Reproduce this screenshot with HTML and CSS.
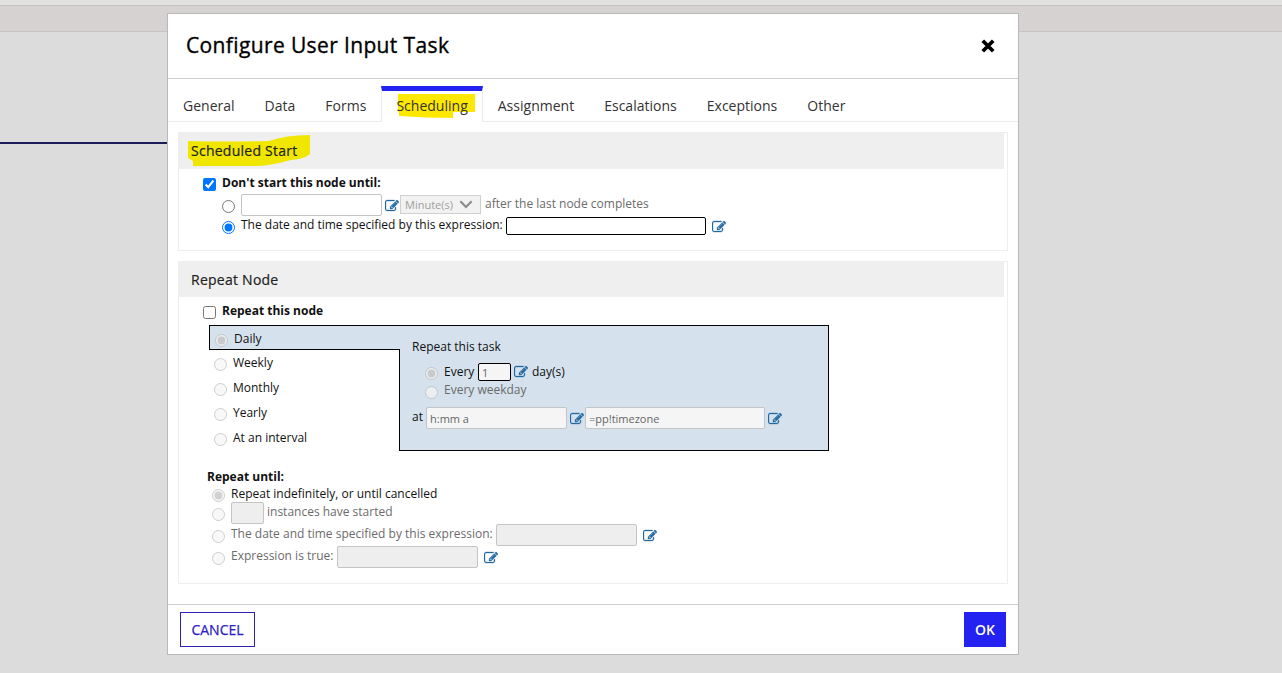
FILE: index.html
```
<!DOCTYPE html>
<html lang="en">
<head>
  <meta charset="UTF-8">
  <meta name="viewport" content="width=device-width, initial-scale=1.0">
  <title>Configure User Input Task</title>
  <link rel="stylesheet" href="styles.css">
</head>
<body>
  <svg class="sprite" width="0" height="0">
    <symbol id="edit" viewBox="0 0 1792 1792">
      <path d="M888 1184l116-116-152-152-116 116v56h96v96h56zm440-720q-16-16-33 1l-350 350q-17 17-1 33t33-1l350-350q17-17 1-33zm80 594v190q0 119-84.5 203.5t-203.5 84.5h-832q-119 0-203.5-84.5t-84.5-203.5v-832q0-119 84.5-203.5t203.5-84.5h832q63 0 117 25 15 7 18 23 3 17-9 29l-49 49q-14 14-32 8-23-6-45-6h-832q-66 0-113 47t-47 113v832q0 66 47 113t113 47h832q66 0 113-47t47-113v-126q0-13 9-22l64-64q15-15 35-7t20 29zm-96-738l288 288-672 672h-288v-288zm444 132l-92 92-288-288 92-92q28-28 68-28t68 28l152 152q28 28 28 68t-28 68z"/>
    </symbol>
  </svg>

  <div class="page-strip"></div>
  <div class="page-toolbar"></div>
  <div class="lane-line"></div>

  <div class="dialog">
    <div class="dialog-header">
      <h1 class="title">Configure User Input Task</h1>
      <svg class="close" viewBox="0 0 12 12"><path d="M1.5 1.5L10.5 10.5M10.5 1.5L1.5 10.5"/></svg>
    </div>

    <div class="tabs">
      <div class="tab">General</div>
      <div class="tab">Data</div>
      <div class="tab">Forms</div>
      <div class="tab active">
        <svg class="marker marker-tab" viewBox="0 0 78 25"><path d="M1 0H78V18H56V24Q28 24 2 22V18H1Z"/></svg>
        <span>Scheduling</span>
      </div>
      <div class="tab">Assignment</div>
      <div class="tab">Escalations</div>
      <div class="tab">Exceptions</div>
      <div class="tab">Other</div>
    </div>

    <div class="dialog-body">
      <div class="section section-start">
        <div class="section-title">
          <svg class="marker marker-title" viewBox="0 0 123 32"><path d="M0 6Q40 7 81 6Q98 0 122 0V19Q117 24 103 25Q82 31 66 31H5V26L0 23Z"/></svg>
          <span>Scheduled Start</span>
        </div>
        <div class="row row-check">
          <input type="checkbox" checked>
          <b>Don't start this node until:</b>
        </div>
        <div class="row row-delay">
          <input type="radio" name="start">
          <input type="text" class="field">
          <svg class="edit"><use href="#edit"/></svg>
          <div class="select">Minute(s)
            <svg class="chevron" viewBox="0 0 12 8"><path d="M1 1.2L6 6.2L11 1.2"/></svg>
          </div>
          <span class="muted">after the last node completes</span>
        </div>
        <div class="row row-date">
          <input type="radio" name="start" checked>
          <span class="label-date">The date and time specified by this expression:</span>
          <input type="text" class="field dark">
          <svg class="edit"><use href="#edit"/></svg>
        </div>
      </div>

      <div class="section section-repeat">
        <div class="section-title"><span>Repeat Node</span></div>
        <div class="row row-check">
          <input type="checkbox">
          <b>Repeat this node</b>
        </div>

        <div class="schedule">
          <div class="periods">
            <div class="period selected"><input type="radio" name="period" checked disabled><span>Daily</span></div>
            <div class="period"><input type="radio" name="period" disabled><span>Weekly</span></div>
            <div class="period"><input type="radio" name="period" disabled><span>Monthly</span></div>
            <div class="period"><input type="radio" name="period" disabled><span>Yearly</span></div>
            <div class="period"><input type="radio" name="period" disabled><span>At an interval</span></div>
          </div>
          <div class="period-panel">
            <div class="panel-heading">Repeat this task</div>
            <div class="row row-every">
              <input type="radio" name="every" checked disabled>
              <span class="label-every">Every</span>
              <input type="text" class="field dark days" value="1" disabled>
              <svg class="edit"><use href="#edit"/></svg>
              <span>day(s)</span>
            </div>
            <div class="row row-weekday">
              <input type="radio" name="every" disabled>
              <span class="muted">Every weekday</span>
            </div>
            <div class="row row-at">
              <span class="label-at">at</span>
              <input type="text" class="field" value="h:mm a" disabled>
              <svg class="edit"><use href="#edit"/></svg>
              <input type="text" class="field zone" value="=pp!timezone" disabled>
              <svg class="edit"><use href="#edit"/></svg>
            </div>
          </div>
        </div>

        <div class="until">
          <b class="until-heading">Repeat until:</b>
          <div class="row row-forever">
            <input type="radio" name="until" checked disabled>
            <span>Repeat indefinitely, or until cancelled</span>
          </div>
          <div class="row row-until">
            <input type="radio" name="until" disabled>
            <input type="text" class="field off count" disabled>
            <span class="muted">instances have started</span>
          </div>
          <div class="row row-until">
            <input type="radio" name="until" disabled>
            <span class="muted label-date">The date and time specified by this expression:</span>
            <input type="text" class="field off" disabled>
            <svg class="edit"><use href="#edit"/></svg>
          </div>
          <div class="row row-until">
            <input type="radio" name="until" disabled>
            <span class="muted label-true">Expression is true:</span>
            <input type="text" class="field off" disabled>
            <svg class="edit"><use href="#edit"/></svg>
          </div>
        </div>
      </div>
    </div>

    <div class="dialog-footer">
      <button class="btn">CANCEL</button>
      <button class="btn primary">OK</button>
    </div>
  </div>
</body>
</html>
```
FILE: styles.css
```
* {
  box-sizing: border-box;
  margin: 0;
  padding: 0;
}

body {
  position: relative;
  height: 673px;
  overflow: hidden;
  background-color: #dcdcdc;
  font-family: "Open Sans", "Noto Sans", sans-serif;
  font-size: 12px;
  line-height: 18px;
  color: #111;
}

.sprite {
  position: absolute;
}

/* page behind the dialog */
.page-strip {
  height: 6px;
  background-color: #e1e1df;
  border-bottom: 1px solid #c5c3c3;
}

.page-toolbar {
  height: 26px;
  background-color: #d6d2d1;
  border-bottom: 1px solid #c6c5c5;
}

.lane-line {
  width: 167px;
  height: 2px;
  margin-top: 110px;
  background-color: #1c1c58;
}

/* dialog */
.dialog {
  position: absolute;
  top: 13px;
  left: 167px;
  width: 852px;
  height: 642px;
  display: flex;
  flex-direction: column;
  background-color: #fff;
  border: 1px solid #b9b9b9;
}

.dialog-header {
  height: 65px;
  padding: 0 23px 0 18px;
  display: flex;
  justify-content: space-between;
  align-items: center;
  border-bottom: 1px solid #d0d0d0;
}

.title {
  margin-bottom: 2px;
  font-size: 21px;
  font-weight: 500;
  line-height: 30px;
  letter-spacing: 0.37px;
  -webkit-text-stroke: 0.35px #000;
  color: #000;
}

.close {
  width: 14px;
  height: 14px;
}

.close path {
  stroke: #000;
  stroke-width: 3.2;
}

.tabs {
  display: flex;
  height: 43px;
  padding-top: 7px;
  border-bottom: 1px solid #ececec;
}

.tab {
  padding: 10px 15px 0;
  font-size: 14px;
  line-height: 20px;
  letter-spacing: 0.01px;
  color: #333;
}

.tab.active {
  position: relative;
  height: 36px;
  padding: 5px 14px 0;
  background-color: #fff;
  border: 1px solid #ececec;
  border-top: 5px solid #2322f0;
  border-bottom: none;
}

.tab span,
.section-title span {
  position: relative;
}

.marker {
  position: absolute;
}

.marker-tab {
  top: 3px;
  left: 15px;
  width: 78px;
  height: 25px;
  fill: #ffe800;
}

.dialog-body {
  flex: 1;
  padding: 10px;
}

.section {
  width: 830px;
  border: 1px solid #eee;
}

.section-start {
  height: 119px;
  margin-bottom: 10px;
}

.section-repeat {
  height: 323px;
}

.section-title {
  position: relative;
  width: 825px;
  height: 36px;
  padding: 8px 12px;
  background-color: #efefef;
  font-size: 14px;
  font-weight: 500;
  line-height: 20px;
  letter-spacing: 0.25px;
  -webkit-text-stroke: 0.2px #222;
  color: #222;
}

.section-repeat .section-title {
  height: 35px;
}

.marker-title {
  top: 2px;
  left: 9px;
  width: 123px;
  height: 32px;
  fill: #f0e600;
  -webkit-text-stroke: 0;
}

/* form rows */
.row {
  display: flex;
  align-items: flex-start;
}

input[type="radio"],
input[type="checkbox"] {
  flex: none;
  width: 13px;
  height: 13px;
}

.muted {
  color: #6b6b6b;
}

.field {
  flex: none;
  width: 141px;
  height: 22px;
  padding: 0 3px;
  border: 1px solid #c4c4c4;
  border-radius: 2px;
  background-color: #fff;
  font-family: inherit;
  font-size: 11px;
  color: #666;
}

.field:disabled {
  background-color: #f5f5f5;
}

.field.off {
  background-color: #eee;
}

.field.dark {
  height: 18px;
  border-color: #000;
}

.edit {
  flex: none;
  width: 14px;
  height: 14px;
  fill: #2268a0;
  stroke: #2268a0;
  stroke-width: 40;
}

.row-check {
  height: 25px;
  padding: 5px 0 0 24px;
}

.row-check input {
  margin: 4px 6px 0 0;
}

.row-delay {
  height: 22px;
  padding-left: 43px;
}

.row-delay input[type="radio"] {
  margin: 6px 6px 0 0;
}

.row-delay .edit {
  margin: 5px 1px 0 3px;
}

.row-delay .muted {
  margin: 1px 0 0 4px;
}

.select {
  width: 81px;
  height: 19px;
  margin-top: 1px;
  padding: 0 7px 0 4px;
  display: flex;
  justify-content: space-between;
  align-items: center;
  background-color: #f2f2f2;
  border: 1px solid #d0d0d0;
  font-size: 11px;
  color: #a0a0a0;
}

.chevron {
  width: 14px;
  height: 9px;
  fill: none;
  stroke: #8a8a8a;
  stroke-width: 1.9;
}

.row-date {
  padding-left: 43px;
}

.row-date input[type="radio"] {
  margin: 5px 6px 0 0;
}

.label-date {
  width: 265px;
  white-space: nowrap;
}

.row-date .field {
  width: 200px;
  margin-top: 1px;
}

.row-date .edit {
  margin: 4px 0 0 6px;
}

/* repeat schedule */
.section-repeat .row-check {
  height: 28px;
}

.schedule {
  display: flex;
  margin-left: 30px;
}

.periods {
  width: 190px;
}

.period {
  display: flex;
  height: 25px;
  padding: 4px 0 0 5px;
}

.period input {
  margin: 4px 6px 0 0;
}

.period.selected {
  position: relative;
  width: 191px;
  background-color: #d5e2ed;
  border: 1px solid #000;
  border-right: none;
}

.period-panel {
  width: 430px;
  height: 126px;
  padding: 12px 0 0 12px;
  background-color: #d5e2ed;
  border: 1px solid #000;
}

.panel-heading {
  height: 25px;
}

.row-every {
  height: 19px;
  padding-left: 13px;
}

.row-every input[type="radio"] {
  margin: 4px 6px 0 0;
}

.label-every {
  width: 34px;
}

.days {
  width: 33px;
}

.row-every .edit {
  margin: 2px 4px 0 3px;
}

.row-weekday {
  height: 25px;
  padding-left: 13px;
}

.row-weekday input {
  margin: 4px 6px 0 0;
}

.row-weekday .muted {
  margin-top: -1px;
}

.label-at {
  width: 14px;
  margin-top: 1px;
}

.row-at .edit {
  margin: 5px 1px 0 3px;
}

.zone {
  width: 180px;
}

.until {
  padding: 17px 0 0 28px;
}

.until-heading {
  display: block;
  height: 17px;
}

.row-forever,
.row-until {
  padding-left: 5px;
}

.row-forever {
  height: 17px;
}

.row-forever input {
  margin: 4px 6px 0 0;
}

.row-until {
  height: 22px;
}

.row-until input[type="radio"] {
  margin: 6px 6px 0 0;
}

.row-until .muted {
  margin-top: 1px;
}

.count {
  width: 33px;
  margin-right: 3px;
}

.label-true {
  width: 106px;
}

.row-until .edit {
  margin: 5px 0 0 6px;
}

.dialog-footer {
  display: flex;
  justify-content: space-between;
  height: 50px;
  padding: 7px 12px;
  border-top: 1px solid #d0d0d0;
}

.btn {
  height: 35px;
  width: 75px;
  background-color: #fff;
  border: 1px solid #2c22b8;
  font-family: inherit;
  font-size: 14px;
  font-weight: 500;
  -webkit-text-stroke: 0.25px #2c22c8;
  color: #2c22c8;
}

.btn.primary {
  width: 42px;
  background-color: #2322f0;
  border-color: #2322f0;
  font-weight: 600;
  -webkit-text-stroke: 0;
  color: #fff;
}
```
